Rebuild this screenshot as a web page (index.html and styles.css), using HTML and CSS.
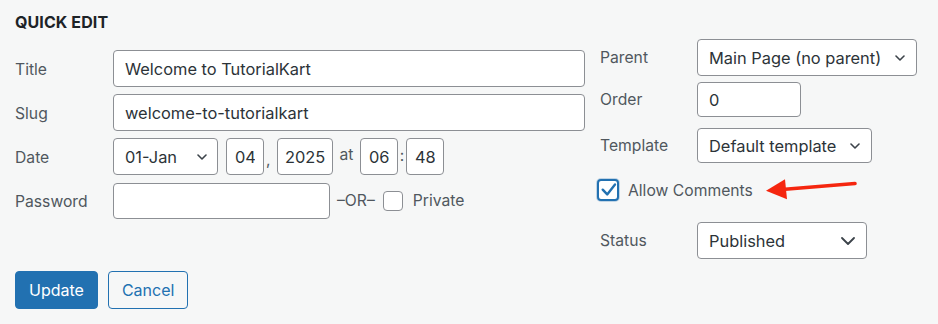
FILE: index.html
```html
<!DOCTYPE html>
<html lang="en">
<head>
<meta charset="utf-8">
<title>Quick Edit</title>
<link rel="stylesheet" href="styles.css">
</head>
<body>
<div class="quick-edit">
  <h2 class="qe-title">QUICK EDIT</h2>
  <div class="cols">
    <div class="col-left">
      <div class="row">
        <span class="label">Title</span>
        <input class="field field-wide" type="text" value="Welcome to TutorialKart">
      </div>
      <div class="row">
        <span class="label">Slug</span>
        <input class="field field-wide" type="text" value="welcome-to-tutorialkart">
      </div>
      <div class="row">
        <span class="label">Date</span>
        <div class="select select-month"><span>01-Jan</span><svg class="chev" width="10" height="6" viewBox="0 0 10 6"><path d="M1 1l4 4 4-4" fill="none" stroke="#3c434a" stroke-width="1.6" stroke-linecap="round" stroke-linejoin="round"/></svg></div>
        <input class="field field-day" type="text" value="04">
        <span class="sep sep-comma">,</span>
        <input class="field field-year" type="text" value="2025">
        <span class="sep sep-at">at</span>
        <input class="field field-day" type="text" value="06">
        <span class="sep sep-colon">:</span>
        <input class="field field-day" type="text" value="48">
      </div>
      <div class="row">
        <span class="label">Password</span>
        <input class="field field-pass" type="text" value="">
        <span class="or">–OR–</span>
        <span class="check"></span>
        <span class="check-label">Private</span>
      </div>
    </div>
    <div class="col-right">
      <div class="row row-parent">
        <span class="label">Parent</span>
        <div class="select select-parent"><span>Main Page (no parent)</span><svg class="chev" width="10" height="6" viewBox="0 0 10 6"><path d="M1 1l4 4 4-4" fill="none" stroke="#3c434a" stroke-width="1.6" stroke-linecap="round" stroke-linejoin="round"/></svg></div>
      </div>
      <div class="row row-order">
        <span class="label">Order</span>
        <input class="field field-order" type="text" value="0">
      </div>
      <div class="row row-template">
        <span class="label">Template</span>
        <div class="select select-template"><span>Default template</span><svg class="chev" width="10" height="6" viewBox="0 0 10 6"><path d="M1 1l4 4 4-4" fill="none" stroke="#3c434a" stroke-width="1.6" stroke-linecap="round" stroke-linejoin="round"/></svg></div>
      </div>
      <div class="row row-comments">
        <span class="check check-on"><svg width="18" height="18" viewBox="0 0 18 18"><path d="M3.7 8.7l4.5 4.7L16 3.5" fill="none" stroke="#2271b1" stroke-width="2.4" stroke-linecap="round" stroke-linejoin="round"/></svg></span>
        <span class="check-label">Allow Comments</span>
      </div>
      <div class="row row-status">
        <span class="label">Status</span>
        <div class="select select-status"><span>Published</span><svg class="chev chev-lg" width="14" height="8" viewBox="0 0 14 8"><path d="M1 1l6 6 6-6" fill="none" stroke="#3c434a" stroke-width="1.8" stroke-linecap="round" stroke-linejoin="round"/></svg></div>
      </div>
    </div>
  </div>
  <div class="actions">
    <button class="btn btn-primary" type="button">Update</button>
    <button class="btn btn-secondary" type="button">Cancel</button>
  </div>
  <svg class="arrow" width="100" height="30" viewBox="0 0 100 30"><path d="M95 7.5L22 13.5" fill="none" stroke="#f5260f" stroke-width="3.6" stroke-linecap="round"/><polygon points="6,14.7 25,3.3 27,23.3" fill="#f5260f"/></svg>
</div>
</body>
</html>
```

FILE: styles.css
```css
* { box-sizing: border-box; }
html, body { margin: 0; padding: 0; }
body {
  background: #f6f7f7;
  font-family: Inter, "Noto Sans", "Liberation Sans", sans-serif;
  color: #3c434a;
  width: 938px;
  height: 324px;
  overflow: hidden;
}
.quick-edit {
  position: relative;
  padding: 12px 0 0 15px;
}
.qe-title {
  margin: 0;
  font-size: 16px;
  line-height: 20px;
  font-weight: 700;
  color: #1d2327;
  letter-spacing: 0.1px;
}
.cols {
  display: flex;
  gap: 12px;
  margin-top: 7px;
}
.col-left {
  width: 570px;
  padding-top: 11px;
  display: flex;
  flex-direction: column;
  gap: 7px;
}
.col-right {
  display: flex;
  flex-direction: column;
}
.row {
  display: flex;
  align-items: center;
  height: 37px;
}
.label {
  width: 98px;
  flex: none;
  font-size: 15.7px;
  color: #50575e;
  padding-top: 2px;
}
.col-right .label {
  width: 100px;
  padding-left: 3px;
  padding-top: 0;
}
.field, .select {
  height: 37px;
  border: 1px solid #8c8f94;
  border-radius: 4px;
  background: #fff;
  font-family: inherit;
  font-size: 16.4px;
  color: #2c3338;
  padding: 0 11px;
  outline: none;
}
.field-wide { width: 472px; }
.field-day { width: 38px; padding: 0 8px; }
.field-year { width: 56px; padding: 0 7px; }
.field-pass { width: 217px; height: 36px; }
.field-order { width: 104px; height: 35px; }
.select {
  display: flex;
  align-items: center;
  justify-content: space-between;
}
.select-month { width: 105px; margin-right: 8px; }
.select-month .chev { margin-right: -1px; }
.select-parent { width: 220px; }
.select-template { width: 175px; height: 35px; }
.select-status { width: 170px; }
.chev { flex: none; }
.sep {
  font-size: 15.7px;
  color: #50575e;
}
.sep-comma { width: 13px; padding-left: 2px; margin-top: 6px; }
.sep-at { width: 27px; text-align: center; margin-top: -5px; }
.sep-colon { width: 8px; text-align: center; margin-top: -3px; }
.or {
  font-size: 15.7px;
  color: #50575e;
  margin-left: 7px;
  margin-right: 8px;
}
.check {
  width: 20px;
  height: 20px;
  flex: none;
  border: 1px solid #8c8f94;
  border-radius: 4px;
  background: #fff;
  display: flex;
  align-items: center;
  justify-content: center;
}
.check-label {
  font-size: 15.7px;
  color: #50575e;
  margin-left: 10px;
}
.check-on {
  width: 22px;
  height: 22px;
  border: 2px solid #2271b1;
  box-shadow: 0 0 0 1px rgba(34, 113, 177, 0.25);
}
.row-parent { margin-top: 0; }
.row-order { margin-top: 6px; height: 35px; }
.row-template { margin-top: 11px; height: 35px; }
.row-comments { margin-top: 16px; height: 22px; }
.row-comments .check-label { margin-left: 9px; }
.row-status { margin-top: 21px; }
.actions {
  display: flex;
  gap: 10px;
  margin-top: 12px;
}
.btn {
  height: 38px;
  border-radius: 4px;
  font-family: inherit;
  font-size: 16px;
  padding: 0 13px;
  border: 1px solid #2271b1;
  cursor: pointer;
}
.btn-primary {
  background: #2271b1;
  color: #fff;
}
.btn-secondary {
  background: #f6f7f7;
  color: #2271b1;
}
.arrow {
  position: absolute;
  left: 760px;
  top: 176px;
}
```
